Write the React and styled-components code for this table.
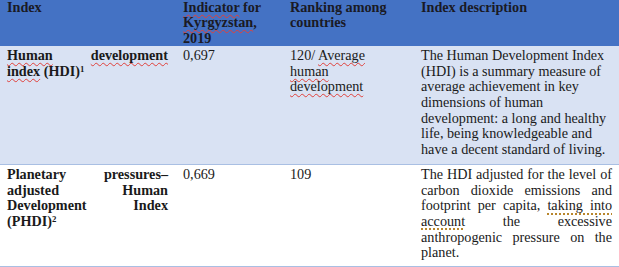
import React from "react";
import styled, { createGlobalStyle } from "styled-components";

const Global = createGlobalStyle`
  html, body { margin: 0; padding: 0; background: #ffffff; }
  body { font-family: "Liberation Serif", "Times New Roman", serif; }
`;

const Table = styled.div`
  width: 619px;
  display: flex;
  flex-direction: column;
  font-family: "Liberation Serif", "Times New Roman", serif;
  font-size: 14.2px;
  color: #1a1a1a;
`;

const Row = styled.div`
  display: grid;
  grid-template-columns: 177px 107px 131px 204px;
  background: ${(p) => p.$bg};
  border-bottom: ${(p) => (p.$line ? "1px solid #a9bfe3" : "none")};
  padding-bottom: ${(p) => p.$extra || "0"};
`;

const Cell = styled.div`
  padding: ${(p) => p.$pad || "2px 7px 5px 6px"};
  line-height: ${(p) => p.$lh || "15.7px"};
  font-weight: ${(p) => (p.$bold ? 700 : 400)};
  text-align: ${(p) => (p.$justify ? "justify" : "left")};
  color: ${(p) => p.$color || "#1a1a1a"};
`;

const Spell = styled.span`
  text-decoration: underline wavy #e0403a;
  text-decoration-thickness: 1px;
  text-underline-offset: 2px;
  text-decoration-skip-ink: none;
`;

const Grammar = styled.span`
  text-decoration: underline dotted #b8862c;
  text-decoration-thickness: 1.5px;
  text-underline-offset: 3px;
`;

const Sup = styled.sup`
  font-size: 0.62em;
  line-height: 0;
  vertical-align: 0.45em;
`;

export default function App() {
  return (
    <>
      <Global />
      <Table>
        <Row $bg="#4472c4">
          <Cell $bold $lh="15.3px" $pad="0 9px 0 7px" $color="#1a1a24">Index</Cell>
          <Cell $bold $lh="15.3px" $pad="0 7px 0 6px" $color="#1a1a24">
            <Spell>Indicator</Spell> for <Spell>Kyrgyzstan</Spell>, 2019
          </Cell>
          <Cell $bold $lh="15.3px" $pad="0 14px 0 6px" $color="#1a1a24">Ranking among countries</Cell>
          <Cell $bold $lh="15.3px" $pad="0 7px 0 6px" $color="#1a1a24">Index description</Cell>
        </Row>
        <Row $bg="#d9e2f3" $line $extra="1px">
          <Cell $bold $justify $pad="2px 9px 5px 7px">
            <Spell>Human</Spell> <Spell>development</Spell> <Spell>index</Spell> (HDI)<Sup>1</Sup>
          </Cell>
          <Cell>0,697</Cell>
          <Cell $pad="2px 14px 5px 6px">
            120/ <Spell>Average</Spell> <Spell>human</Spell> <Spell>development</Spell>
          </Cell>
          <Cell>
            The Human Development Index (HDI) is a summary measure of average achievement in key
            dimensions of human development: a long and healthy life, being knowledgeable and have a
            decent standard of living.
          </Cell>
        </Row>
        <Row $bg="#ffffff" $line>
          <Cell $bold $justify $pad="2px 9px 5px 7px">
            Planetary pressures–adjusted Human Development Index (PHDI)<Sup>2</Sup>
          </Cell>
          <Cell>0,669</Cell>
          <Cell $pad="2px 14px 5px 6px">109</Cell>
          <Cell $justify>
            The HDI adjusted for the level of carbon dioxide emissions and footprint per capita,{" "}
            <Grammar>taking into account</Grammar> the excessive anthropogenic pressure on the planet.
          </Cell>
        </Row>
      </Table>
    </>
  );
}
